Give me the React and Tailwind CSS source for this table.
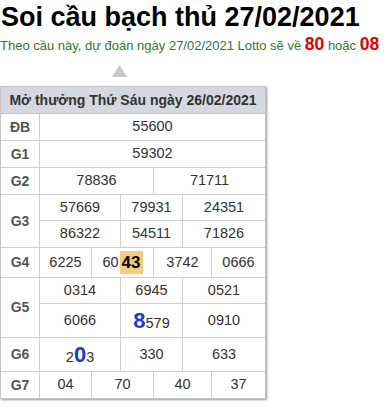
const F = { fontFamily: '"Liberation Sans", Arial, sans-serif' };

function Row({ label, children, last }) {
  return (
    <div className={`flex ${last ? "" : "border-b border-[#cfcfcf]"}`}>
      <div className="w-[39px] shrink-0 border-r border-[#cfcfcf] flex items-center justify-center font-bold text-[14px] text-[#555]">
        {label}
      </div>
      <div className="flex-1 flex flex-col">{children}</div>
    </div>
  );
}

function Cells({ widths, values, h = "h-[26px]", border }) {
  return (
    <div className={`flex ${h} ${border ? "border-b border-[#cfcfcf]" : ""}`}>
      {values.map((v, i) => (
        <div
          key={i}
          className={`flex items-center justify-center text-[14.5px] text-[#333] ${
            i < values.length - 1 ? "border-r border-[#cfcfcf] shrink-0" : "flex-1"
          }`}
          style={i < values.length - 1 ? { width: widths[i] } : undefined}
        >
          {v}
        </div>
      ))}
    </div>
  );
}

const W3 = [81, 62];
const W4 = [52, 62, 58];

export default function App() {
  return (
    <div className="bg-white w-[384px] h-[407px] overflow-hidden" style={F}>
      <h1 className="text-[27px] font-bold leading-[31px] pt-[2px] pl-[1px] text-black">
        Soi cầu bạch thủ 27/02/2021
      </h1>
      <p className="mt-[3px] text-[13px] leading-[20px] text-[#2e7a2e] whitespace-nowrap">
        Theo cầu này, dự đoán ngày 27/02/2021 Lotto sẽ về{" "}
        <span className="text-[17.5px] font-bold text-[#e00000] leading-none">80</span> hoặc{" "}
        <span className="text-[17.5px] font-bold text-[#e00000] leading-none">08</span>
      </p>
      <div className="h-[30px] pt-[9px] pl-[112px]">
        <svg width="15" height="12" viewBox="0 0 15 12">
          <polygon points="7.5,0 15,12 0,12" fill="#c9c9c9" />
        </svg>
      </div>
      <div className="w-[266px] border border-[#c4c4c4] shadow-[1px_1px_2px_#999]">
        <div className="h-[27px] bg-[#d6d8df] border-b border-[#c4c4c4] flex items-center justify-center font-bold text-[14px] text-[#333]">
          Mở thưởng Thứ Sáu ngày 26/02/2021
        </div>
        <Row label="ĐB">
          <Cells widths={[]} values={["55600"]} />
        </Row>
        <Row label="G1">
          <Cells widths={[]} values={["59302"]} />
        </Row>
        <Row label="G2">
          <Cells widths={[114]} values={["78836", "71711"]} />
        </Row>
        <Row label="G3">
          <Cells widths={W3} values={["57669", "79931", "24351"]} border />
          <Cells widths={W3} values={["86322", "54511", "71826"]} />
        </Row>
        <Row label="G4">
          <Cells
            widths={W4}
            h="h-[29px]"
            values={[
              "6225",
              <span className="flex items-center">
                60
                <span className="ml-[1px] bg-[#f8cb78] font-bold text-[17px] text-black px-[2px] h-[23px] flex items-center">
                  43
                </span>
              </span>,
              "3742",
              "0666",
            ]}
          />
        </Row>
        <Row label="G5">
          <Cells widths={W3} values={["0314", "6945", "0521"]} border />
          <Cells
            widths={W3}
            h="h-[33px]"
            values={[
              "6066",
              <span className="flex items-baseline">
                <span className="text-[22px] font-bold text-[#1a3ad8]">8</span>
                579
              </span>,
              "0910",
            ]}
          />
        </Row>
        <Row label="G6">
          <Cells
            widths={W3}
            h="h-[33px]"
            values={[
              <span className="flex items-baseline">
                2<span className="text-[22px] font-bold text-[#1a3ad8]">0</span>3
              </span>,
              "330",
              "633",
            ]}
          />
        </Row>
        <Row label="G7" last>
          <Cells widths={W4} values={["04", "70", "40", "37"]} />
        </Row>
      </div>
    </div>
  );
}
